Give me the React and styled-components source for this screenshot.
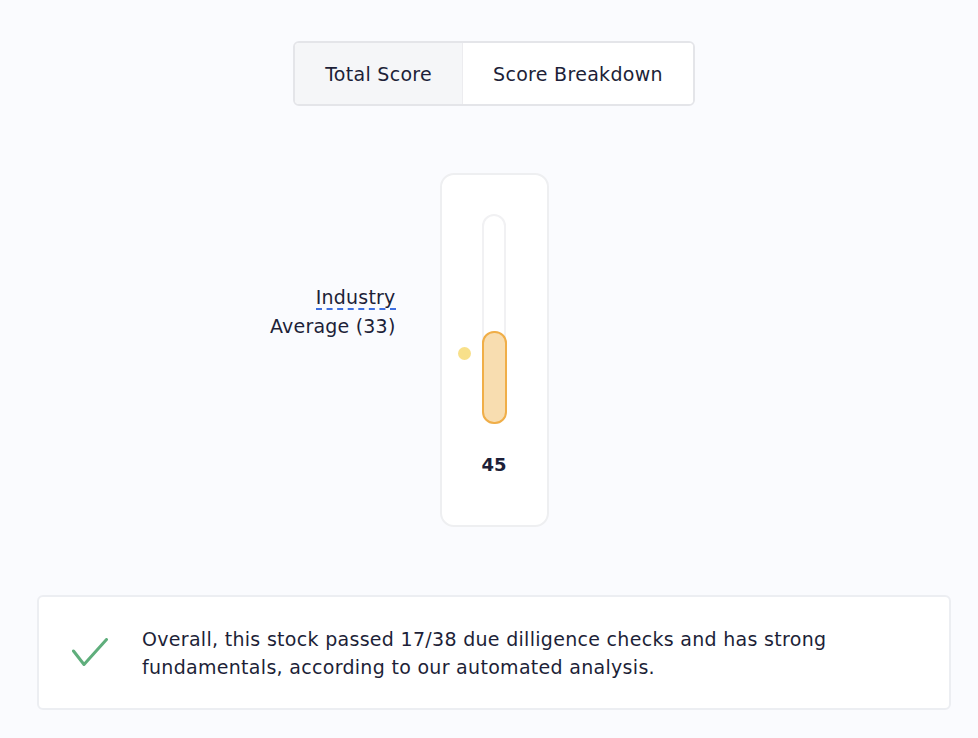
import React, { useState } from 'react';
import styled, { createGlobalStyle } from 'styled-components';

const GlobalStyle = createGlobalStyle`
    html, body {
        margin: 0;
        padding: 0;
        background: #fafbfe;
    }
    body {
        font-family: "DejaVu Sans", "Open Sans", sans-serif;
        color: #1d1f38;
    }
`;

const score = 45;
const industry = 33;
const TRACK_H = 210;
const TRACK_TOP = 39;

const App = () => {
    const [tab, changeTab] = useState('total');

    return (
        <Pagina>
            <GlobalStyle />
            <Tabs>
                <Tab activo={tab === 'total'} onClick={() => changeTab('total')}>Total Score</Tab>
                <Tab activo={tab === 'breakdown'} onClick={() => changeTab('breakdown')}>Score Breakdown</Tab>
            </Tabs>

            <Grafico>
                <Etiqueta style={{ marginTop: TRACK_TOP + TRACK_H * (1 - industry / 100) - 70 }}>
                    <Subrayado>Industry</Subrayado>
                    <br />
                    Average ({industry})
                </Etiqueta>
                <Tarjeta>
                    <Pista>
                        <Punto style={{ bottom: `${industry}%` }} />
                        <Relleno style={{ height: `${score}%` }} />
                    </Pista>
                    <Valor>{score}</Valor>
                </Tarjeta>
            </Grafico>

            <Resumen>
                <svg width="36" height="30" viewBox="0 0 36 30">
                    <polyline points="1.5,13 12,26.5 34.5,1.5" fill="none" stroke="#5fae7c" strokeWidth="3" strokeLinecap="round" strokeLinejoin="round" />
                </svg>
                <Texto>
                    Overall, this stock passed 17/38 due dilligence checks and has strong fundamentals, according to our automated analysis.
                </Texto>
            </Resumen>
        </Pagina>
    );
}

const Pagina = styled.div`
    width: 978px;
    min-height: 738px;
    box-sizing: border-box;
    padding: 41px 27px 0 37px;
    display: flex;
    flex-direction: column;
    align-items: center;
`;

const Tabs = styled.div`
    display: flex;
    border: 2px solid #e4e5e9;
    border-radius: 6px;
    overflow: hidden;
    background: #fff;
`;

const Tab = styled.button`
    height: 61px;
    padding: 0 30px;
    border: none;
    outline: none;
    cursor: pointer;
    font-family: inherit;
    font-size: 19px;
    letter-spacing: 0.3px;
    color: #1d1f38;
    background: ${({ activo }) => (activo ? '#f5f6f8' : '#fff')};
    & + & {
        border-left: 1px solid #ececef;
    }
`;

const Grafico = styled.div`
    display: flex;
    align-items: flex-start;
    gap: 44px;
    margin-top: 67px;
    margin-left: -197px;
`;

const Etiqueta = styled.div`
    width: 153px;
    text-align: right;
    font-size: 19px;
    line-height: 29px;
    letter-spacing: 0.2px;
    white-space: nowrap;
    color: #1d1f38;
`;

const Subrayado = styled.span`
    border-bottom: 2px dashed #3d6fe0;
`;

const Tarjeta = styled.div`
    width: 105px;
    height: 350px;
    background: #fff;
    border: 2px solid #eeeff1;
    border-radius: 14px;
    display: flex;
    flex-direction: column;
    align-items: center;
`;

const Pista = styled.div`
    position: relative;
    margin-top: ${TRACK_TOP}px;
    width: 24px;
    height: ${TRACK_H}px;
    border: 2px solid #f1f1f3;
    border-radius: 12px;
    background: #fff;
    box-sizing: border-box;
    display: flex;
    flex-direction: column;
    justify-content: flex-end;
    align-items: center;
`;

const Relleno = styled.div`
    width: 25px;
    box-sizing: border-box;
    margin-bottom: -2px;
    background: #f8ddb0;
    border: 2px solid #f0ae48;
    border-radius: 12px;
    flex-shrink: 0;
`;

const Punto = styled.div`
    position: absolute;
    left: -26px;
    width: 13px;
    height: 13px;
    margin-bottom: -6px;
    border-radius: 50%;
    background: #f8e08a;
`;

const Valor = styled.div`
    margin-top: 30px;
    font-size: 18px;
    font-weight: 700;
    color: #1d1f38;
`;

const Resumen = styled.div`
    align-self: stretch;
    margin-top: 68px;
    height: 115px;
    box-sizing: border-box;
    background: #fff;
    border: 2px solid #eceef2;
    border-radius: 6px;
    display: flex;
    align-items: center;
    padding: 0 0 0 33px;
    gap: 34px;

    svg {
        flex-shrink: 0;
    }
`;

const Texto = styled.p`
    margin: 0;
    max-width: 730px;
    font-size: 19px;
    line-height: 28px;
    letter-spacing: 0.3px;
    color: #1d1f38;
`;

export default App;
